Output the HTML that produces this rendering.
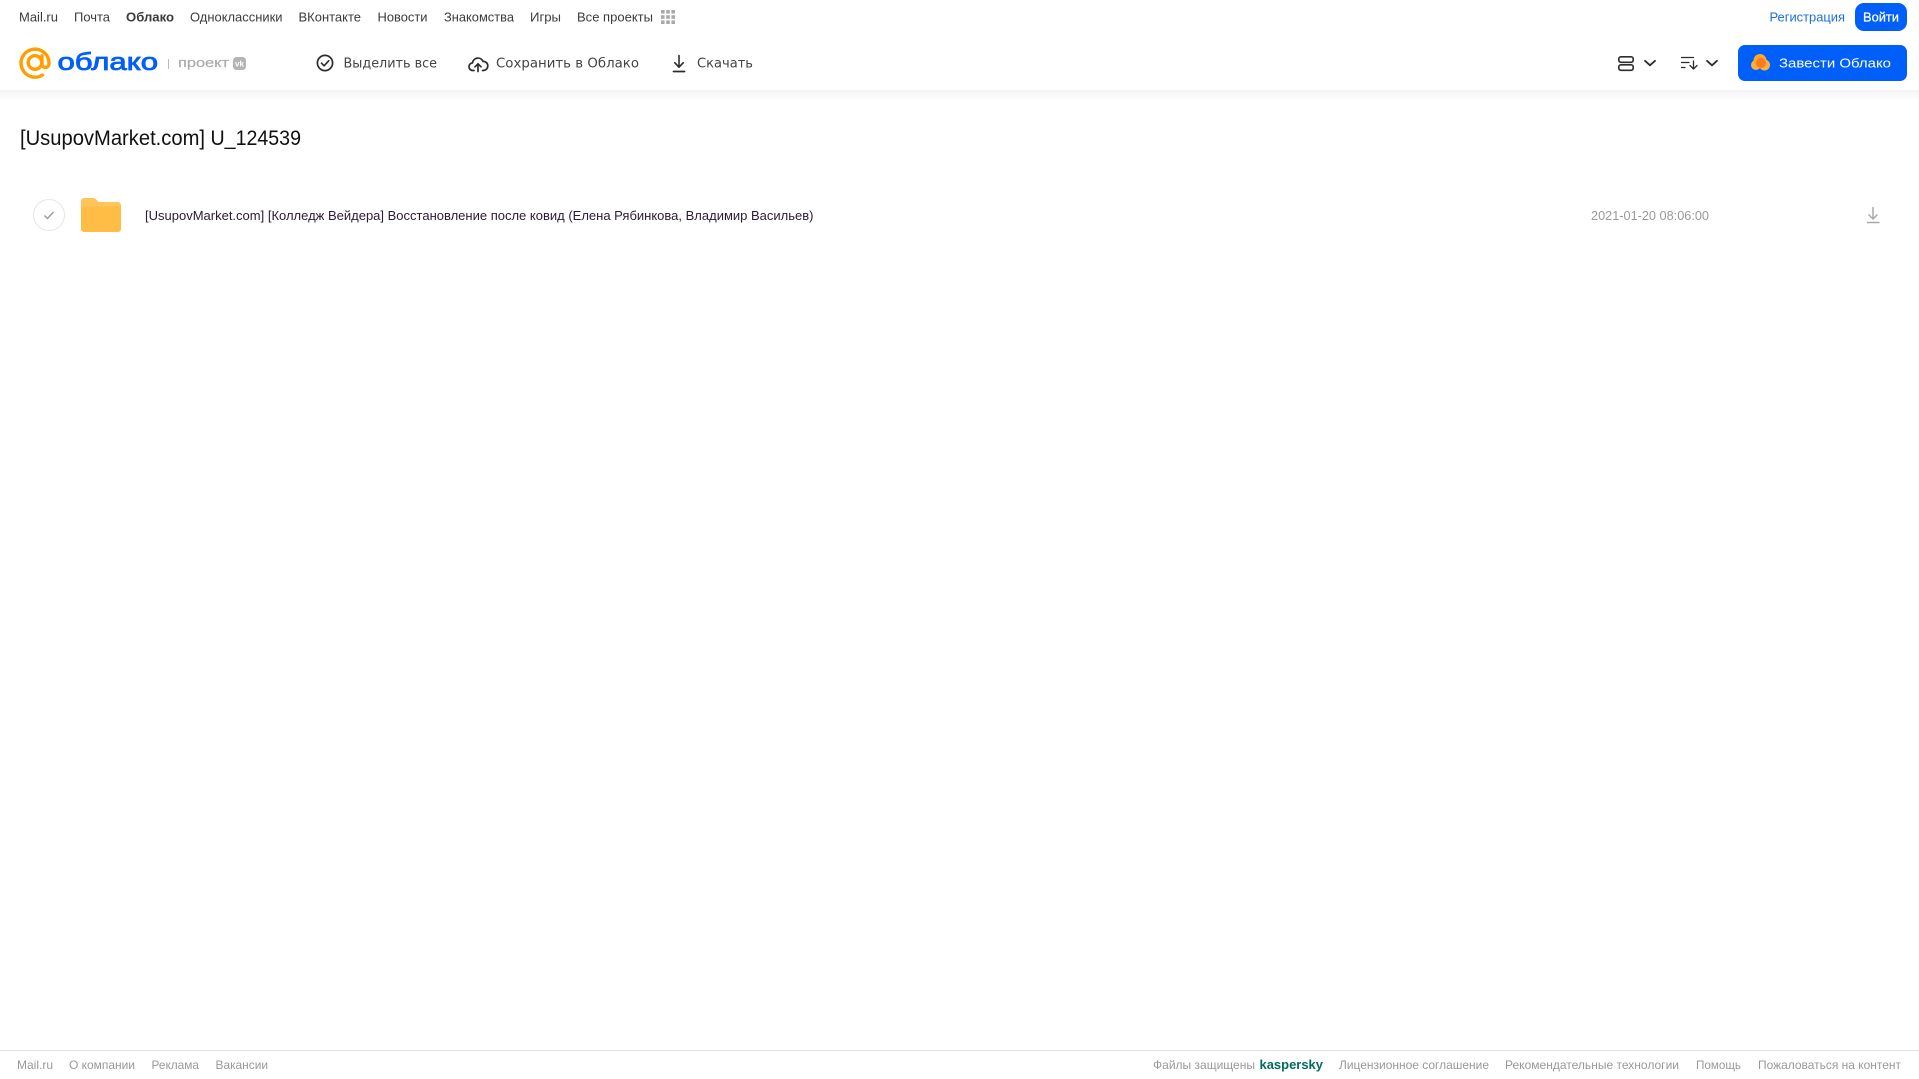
<!DOCTYPE html>
<html lang="ru">
<head>
<meta charset="utf-8">
<title>[UsupovMarket.com] U_124539</title>
<style>
html,body{margin:0;padding:0;background:#fff;width:1919px;height:1079px;overflow:hidden}
.shadow{position:absolute;left:0;top:90px;width:1919px;height:12px;background:linear-gradient(#f3f3f3,#fff)}
svg{position:absolute;left:0;top:0}
text{font-family:"Liberation Sans",Arial,sans-serif;white-space:pre}
.n{font-size:13px;fill:#3a3b3c}
.t{font-family:"DejaVu Sans",sans-serif;font-size:13px;fill:#444}
.f{font-size:12px;fill:#999}
</style>
</head>
<body>
<div class="shadow"></div>
<svg width="1919" height="1079" viewBox="0 0 1919 1079" xmlns="http://www.w3.org/2000/svg">
  <!-- top nav -->
  <text class="n" x="19" y="21.5" textLength="39" lengthAdjust="spacingAndGlyphs">Mail.ru</text>
  <text class="n" x="74" y="21.5" textLength="36" lengthAdjust="spacingAndGlyphs">Почта</text>
  <text class="n" x="126" y="21.5" textLength="48" lengthAdjust="spacingAndGlyphs" font-weight="700">Облако</text>
  <text class="n" x="190" y="21.5" textLength="92.500" lengthAdjust="spacingAndGlyphs">Одноклассники</text>
  <text class="n" x="298.500" y="21.5" textLength="62.500" lengthAdjust="spacingAndGlyphs">ВКонтакте</text>
  <text class="n" x="377.500" y="21.5" textLength="50" lengthAdjust="spacingAndGlyphs">Новости</text>
  <text class="n" x="444" y="21.5" textLength="70" lengthAdjust="spacingAndGlyphs">Знакомства</text>
  <text class="n" x="530" y="21.5" textLength="31" lengthAdjust="spacingAndGlyphs">Игры</text>
  <text class="n" x="577" y="21.5" textLength="76" lengthAdjust="spacingAndGlyphs">Все проекты</text>
  <g fill="#a9a9a9">
    <rect x="661" y="10" width="3.600" height="3.600"/><rect x="666.200" y="10" width="3.600" height="3.600"/><rect x="671.400" y="10" width="3.600" height="3.600"/>
    <rect x="661" y="15.200" width="3.600" height="3.600"/><rect x="666.200" y="15.200" width="3.600" height="3.600"/><rect x="671.400" y="15.200" width="3.600" height="3.600"/>
    <rect x="661" y="20.400" width="3.600" height="3.600"/><rect x="666.200" y="20.400" width="3.600" height="3.600"/><rect x="671.400" y="20.400" width="3.600" height="3.600"/>
  </g>
  <text x="1769.500" y="21.5" font-size="13" fill="#1a6fe0" textLength="75.500" lengthAdjust="spacingAndGlyphs">Регистрация</text>
  <rect x="1855" y="3" width="52" height="28" rx="9" fill="#005ff9"/>
  <text x="1863" y="21.5" font-size="13" fill="#fff" stroke="#fff" stroke-width=".25" textLength="36" lengthAdjust="spacingAndGlyphs">Войти</text>

  <!-- logo -->
  <g fill="none" stroke="#ff9e00" stroke-width="3.400" stroke-linecap="round">
    <circle cx="35" cy="62.500" r="6.800"/>
    <path d="M42.500 75A14 14 0 1 1 49 62.500V64A3.500 3.500 0 0 1 42 64V55.800"/>
  </g>
  <text x="57.500" y="70" font-family="'DejaVu Sans',sans-serif" font-size="24" fill="#005ff9" stroke="#005ff9" stroke-width=".8" textLength="100.500" lengthAdjust="spacingAndGlyphs">облако</text>
  <rect x="168" y="59" width="1" height="10" fill="#bbb"/>
  <text x="178" y="67" font-family="'DejaVu Sans',sans-serif" font-size="13" fill="#aaa" stroke="#aaa" stroke-width=".2" textLength="51" lengthAdjust="spacingAndGlyphs">проект</text>
  <rect x="233" y="57" width="13" height="13" rx="3.500" fill="#b4b4b4"/>
  <text x="235" y="66.500" font-size="8" font-weight="700" fill="#fff" textLength="9" lengthAdjust="spacingAndGlyphs">vk</text>

  <!-- toolbar -->
  <g fill="none" stroke="#2c2d2e" stroke-width="1.700" stroke-linecap="round" stroke-linejoin="round">
    <circle cx="325" cy="63" r="7.600"/>
    <path d="M321.500 63.200l2.600 2.600 4.600-5"/>
    <path d="M474 70.500h-1a3.800 3.800 0 0 1-.5-7.600a5.500 5.500 0 0 1 10.500-1.500a4.400 4.400 0 0 1 .5 9.100h-1"/>
    <path d="M478 71.500v-7.500M475 66.800l3-3 3 3"/>
    <path d="M679 55.500v11.500M674.700 62.700l4.300 4.500 4.300-4.500" stroke-width="1.600"/>
    <path d="M673.500 71.500h11" stroke-width="1.800"/>
  </g>
  <text class="t" x="343.500" y="67.500" textLength="93.500" lengthAdjust="spacingAndGlyphs">Выделить все</text>
  <text class="t" x="496" y="67.500" textLength="143" lengthAdjust="spacingAndGlyphs">Сохранить в Облако</text>
  <text class="t" x="697" y="67.500" textLength="56" lengthAdjust="spacingAndGlyphs">Скачать</text>

  <!-- right controls -->
  <g fill="none" stroke="#2c2d2e" stroke-width="1.600" stroke-linecap="round" stroke-linejoin="round">
    <rect x="1618.800" y="56.800" width="14.400" height="5.500" rx="2"/>
    <rect x="1618.800" y="64.800" width="14.400" height="5.500" rx="2"/>
    <path d="M1645 60.800l5 4.500 5-4.500" stroke-width="1.800"/>
    <path d="M1707 60.800l5 4.500 5-4.500" stroke-width="1.800"/>
    <g stroke-width="1.300">
      <path d="M1681.500 57.500h12M1681.500 62.500h7.500M1681.500 67.500h3.500"/>
      <path d="M1693.500 61v7.500M1690 65.500l3.500 3.500 3.500-3.500"/>
    </g>
  </g>
  <rect x="1738" y="45" width="169" height="36" rx="7" fill="#005ff9"/>
  <circle cx="1756" cy="65" r="5" fill="#ffb13d"/>
  <circle cx="1760" cy="60.500" r="6.500" fill="#ffa92b"/>
  <circle cx="1764.500" cy="65" r="5.500" fill="#ffb13d"/>
  <circle cx="1761" cy="63" r="5" fill="#ff7a1f"/>
  <text x="1779" y="67.500" font-family="'DejaVu Sans',sans-serif" font-size="13" fill="#fff" textLength="112" lengthAdjust="spacingAndGlyphs">Завести Облако</text>

  <!-- title -->
  <text x="20" y="145" font-size="21" fill="#111" textLength="185" lengthAdjust="spacingAndGlyphs">[UsupovMarket.com]</text>
  <text x="210.500" y="145" font-size="21" fill="#111" textLength="90.500" lengthAdjust="spacingAndGlyphs">U_124539</text>

  <!-- row -->
  <circle cx="49" cy="215" r="15.500" fill="#fff" stroke="#e6e6e6"/>
  <path d="M44.500 215.500l3 3 6-6.500" fill="none" stroke="#9a9a9a" stroke-width="1.400"/>
  <path d="M81 201.500q0-3.500 3.500-3.500h8q2.500 0 4 1.700l2 2.300h19q3.500 0 3.500 3.500v23q0 3.500-3.500 3.500h-33q-3.500 0-3.500-3.500z" fill="#ffc45a"/>
  <path d="M81 206.500h40v22q0 3.500-3.500 3.500h-33q-3.500 0-3.500-3.500z" fill="#ffbd45"/>
  <text x="145" y="220" font-size="13" fill="#2a1a3a" textLength="668.500" lengthAdjust="spacingAndGlyphs">[UsupovMarket.com] [Колледж Вейдера] Восстановление после ковид (Елена Рябинкова, Владимир Васильев)</text>
  <text x="1591" y="220" font-size="13" fill="#999" textLength="118" lengthAdjust="spacingAndGlyphs">2021-01-20 08:06:00</text>
  <g fill="none" stroke="#a8a8a8" stroke-width="1.500">
    <path d="M1873 207v12M1868.500 214.500l4.500 4.500 4.500-4.500"/>
    <path d="M1867 222.500h12.500"/>
  </g>

  <!-- footer -->
  <rect x="0" y="1050" width="1919" height="1" fill="#e0e0e0"/>
  <text class="f" x="17" y="1069" textLength="36" lengthAdjust="spacingAndGlyphs">Mail.ru</text>
  <text class="f" x="69" y="1069" textLength="66" lengthAdjust="spacingAndGlyphs">О компании</text>
  <text class="f" x="151.500" y="1069" textLength="47.500" lengthAdjust="spacingAndGlyphs">Реклама</text>
  <text class="f" x="215.500" y="1069" textLength="52.500" lengthAdjust="spacingAndGlyphs">Вакансии</text>
  <text class="f" x="1153" y="1069" textLength="102" lengthAdjust="spacingAndGlyphs">Файлы защищены</text>
  <text x="1259.500" y="1069" font-size="13" font-weight="700" fill="#006d5c" textLength="63.500" lengthAdjust="spacingAndGlyphs">kaspersky</text>
  <text class="f" x="1339" y="1069" textLength="150" lengthAdjust="spacingAndGlyphs">Лицензионное соглашение</text>
  <text class="f" x="1505" y="1069" textLength="174" lengthAdjust="spacingAndGlyphs">Рекомендательные технологии</text>
  <text class="f" x="1696" y="1069" textLength="45" lengthAdjust="spacingAndGlyphs">Помощь</text>
  <text class="f" x="1758" y="1069" textLength="143" lengthAdjust="spacingAndGlyphs">Пожаловаться на контент</text>
</svg>
</body>
</html>
